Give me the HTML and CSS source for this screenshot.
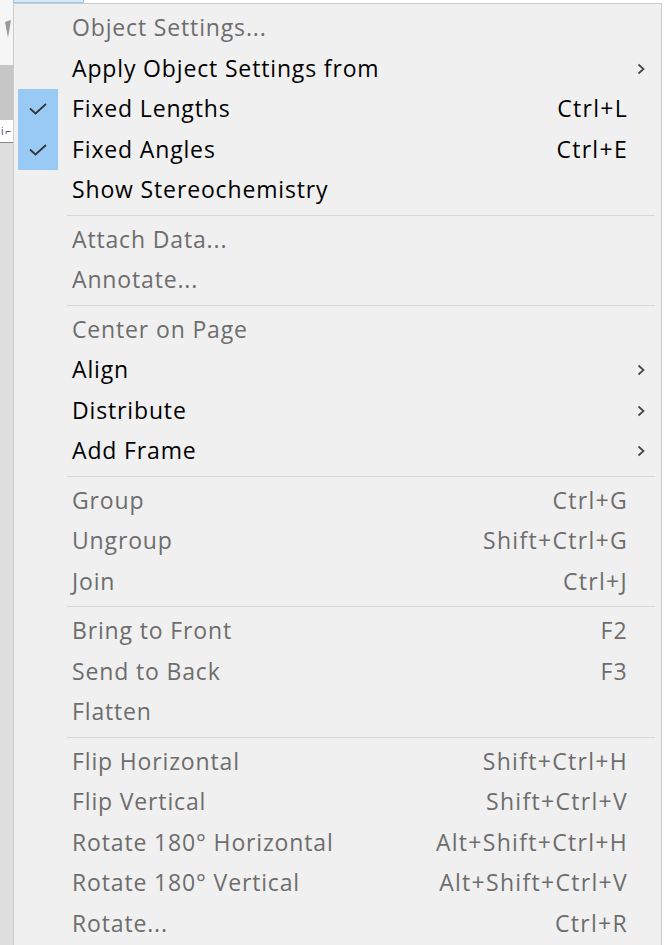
FILE: index.html
```html
<!DOCTYPE html>
<html lang="en">
<head>
  <meta charset="UTF-8">
  <meta name="viewport" content="width=device-width, initial-scale=1.0">
  <title>Object Menu</title>
  <link rel="stylesheet" href="styles.css">
</head>
<body>

  <div class="edge">
    <div class="edge-top">
      <svg width="13" height="40" viewBox="0 0 13 40"><path d="M5 22 L11 20 L8 38 Z" fill="#9a9a9a"/></svg>
    </div>
    <div class="edge-bar"></div>
    <div class="edge-field"><span>i</span><span class="tick">⌐</span></div>
    <div class="edge-rest"></div>
  </div>

  <div class="main">
    <div class="tab"></div>
    <div class="menu">
      <div class="item off"><span class="check"></span><span class="label">Object Settings...</span><span class="key"></span><span class="arrow"></span></div>
      <div class="item"><span class="check"></span><span class="label">Apply Object Settings from</span><span class="key"></span><span class="arrow"><svg width="8" height="12" viewBox="0 0 8 12"><path d="M1.5 1.5 L6.5 6 L1.5 10.5" fill="none" stroke="#444" stroke-width="1.7"/></svg></span></div>
      <div class="item"><span class="check on"><svg width="18" height="12" viewBox="0 0 18 12"><path d="M1 5.5 L6.5 10.5 L17 1" fill="none" stroke="#333" stroke-width="1.7"/></svg></span><span class="label">Fixed Lengths</span><span class="key">Ctrl+L</span><span class="arrow"></span></div>
      <div class="item"><span class="check on"><svg width="18" height="12" viewBox="0 0 18 12"><path d="M1 5.5 L6.5 10.5 L17 1" fill="none" stroke="#333" stroke-width="1.7"/></svg></span><span class="label">Fixed Angles</span><span class="key">Ctrl+E</span><span class="arrow"></span></div>
      <div class="item"><span class="check"></span><span class="label">Show Stereochemistry</span><span class="key"></span><span class="arrow"></span></div>
      <div class="sep"></div>
      <div class="item off"><span class="check"></span><span class="label">Attach Data...</span><span class="key"></span><span class="arrow"></span></div>
      <div class="item off"><span class="check"></span><span class="label">Annotate...</span><span class="key"></span><span class="arrow"></span></div>
      <div class="sep"></div>
      <div class="item off"><span class="check"></span><span class="label">Center on Page</span><span class="key"></span><span class="arrow"></span></div>
      <div class="item"><span class="check"></span><span class="label">Align</span><span class="key"></span><span class="arrow"><svg width="8" height="12" viewBox="0 0 8 12"><path d="M1.5 1.5 L6.5 6 L1.5 10.5" fill="none" stroke="#444" stroke-width="1.7"/></svg></span></div>
      <div class="item"><span class="check"></span><span class="label">Distribute</span><span class="key"></span><span class="arrow"><svg width="8" height="12" viewBox="0 0 8 12"><path d="M1.5 1.5 L6.5 6 L1.5 10.5" fill="none" stroke="#444" stroke-width="1.7"/></svg></span></div>
      <div class="item"><span class="check"></span><span class="label">Add Frame</span><span class="key"></span><span class="arrow"><svg width="8" height="12" viewBox="0 0 8 12"><path d="M1.5 1.5 L6.5 6 L1.5 10.5" fill="none" stroke="#444" stroke-width="1.7"/></svg></span></div>
      <div class="sep"></div>
      <div class="item off"><span class="check"></span><span class="label">Group</span><span class="key">Ctrl+G</span><span class="arrow"></span></div>
      <div class="item off"><span class="check"></span><span class="label">Ungroup</span><span class="key">Shift+Ctrl+G</span><span class="arrow"></span></div>
      <div class="item off"><span class="check"></span><span class="label">Join</span><span class="key">Ctrl+J</span><span class="arrow"></span></div>
      <div class="sep"></div>
      <div class="item off"><span class="check"></span><span class="label">Bring to Front</span><span class="key">F2</span><span class="arrow"></span></div>
      <div class="item off"><span class="check"></span><span class="label">Send to Back</span><span class="key">F3</span><span class="arrow"></span></div>
      <div class="item off"><span class="check"></span><span class="label">Flatten</span><span class="key"></span><span class="arrow"></span></div>
      <div class="sep"></div>
      <div class="item off"><span class="check"></span><span class="label">Flip Horizontal</span><span class="key">Shift+Ctrl+H</span><span class="arrow"></span></div>
      <div class="item off"><span class="check"></span><span class="label">Flip Vertical</span><span class="key">Shift+Ctrl+V</span><span class="arrow"></span></div>
      <div class="item off"><span class="check"></span><span class="label">Rotate 180° Horizontal</span><span class="key">Alt+Shift+Ctrl+H</span><span class="arrow"></span></div>
      <div class="item off"><span class="check"></span><span class="label">Rotate 180° Vertical</span><span class="key">Alt+Shift+Ctrl+V</span><span class="arrow"></span></div>
      <div class="item off"><span class="check"></span><span class="label">Rotate...</span><span class="key">Ctrl+R</span><span class="arrow"></span></div>
    </div>
  </div>

</body>
</html>
```

FILE: styles.css
```css
body {
  margin: 0;
  padding: 0;
  background-color: white;
  font-family: "Open Sans", "Noto Sans", sans-serif;
  display: flex;
  height: 945px;
  overflow: hidden;
}

/* strip of the window behind the menu */
.edge {
  width: 13px;
  display: flex;
  flex-direction: column;
  background-color: #dedede;
}

.edge-top {
  height: 65px;
  background-color: #f6f6f6;
}

.edge-bar {
  height: 55px;
  background-color: #c6c6c6;
}

.edge-field {
  height: 22px;
  background-color: white;
  border-bottom: 1px solid #888;
  font-size: 10px;
  color: #2233aa;
  display: flex;
  align-items: center;
  gap: 2px;
  padding-left: 1px;
}

.edge-field .tick {
  color: #333;
}

.edge-rest {
  flex: 1;
}

.main {
  width: 649px;
  display: flex;
  flex-direction: column;
}

.tab {
  width: 69px;
  height: 2px;
  background-color: #dbe9f7;
  border: 1px solid #9cc3ea;
  border-top: none;
}

.menu {
  flex: 1;
  background-color: #f0f0f0;
  border: 1px solid #cccccc;
  border-bottom: none;
  padding-top: 4px;
}

.item {
  display: grid;
  grid-template-columns: 44px 1fr auto 34px;
  align-items: center;
  height: 40.5px;
  font-size: 23px;
  letter-spacing: 0.85px;
  color: #000;
}

.item .label,
.item .key {
  position: relative;
  top: -1px;
}

.item.off {
  color: #6d6d6d;
}

.check {
  margin-left: 4px;
  height: 100%;
  display: flex;
  align-items: center;
  justify-content: center;
}

.check.on {
  background-color: #99c9f5;
}

.label {
  padding-left: 14px;
}

.key {
  text-align: right;
  letter-spacing: 1.3px;
  margin-right: -1px;
}

.arrow {
  display: flex;
  justify-content: center;
  padding-right: 7px;
}

.sep {
  height: 1px;
  margin: 4px 6px 4px 53px;
  background-color: #d7d7d7;
}
```
